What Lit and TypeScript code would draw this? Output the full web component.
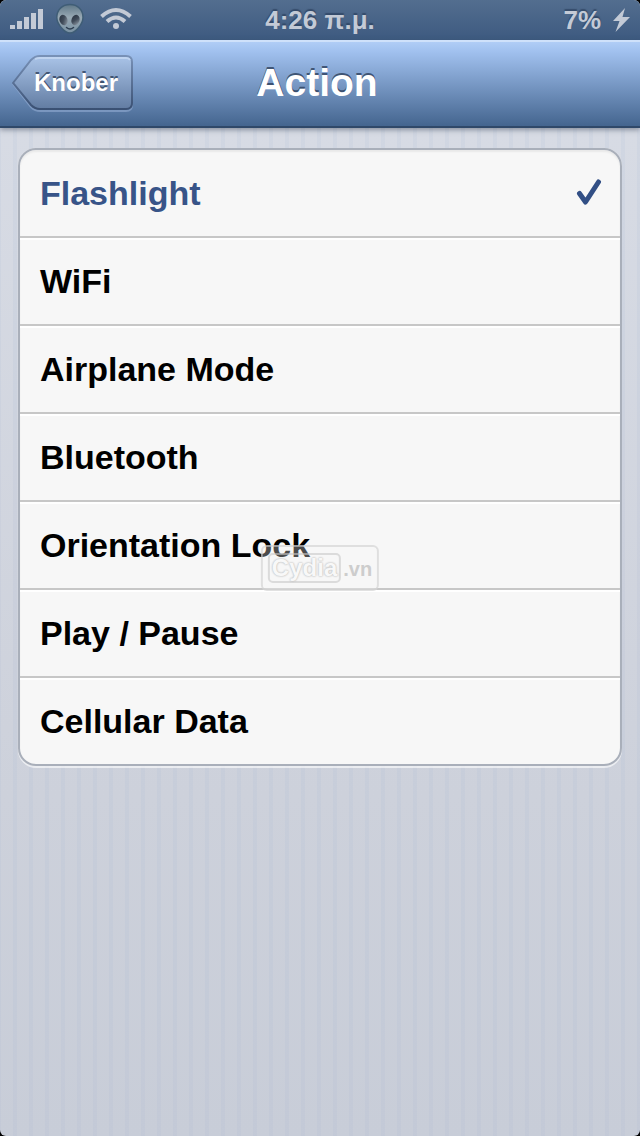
import { LitElement, html, css, svg } from "lit";
import { customElement, state } from "lit/decorators.js";

const ACTIONS = [
  "Flashlight",
  "WiFi",
  "Airplane Mode",
  "Bluetooth",
  "Orientation Lock",
  "Play / Pause",
  "Cellular Data",
];

@customElement("status-bar")
class StatusBar extends LitElement {
  static styles = css`
    :host {
      display: grid;
      grid-template-columns: 1fr auto 1fr;
      align-items: center;
      height: 40px;
      padding: 0 10px;
      box-sizing: border-box;
      background: linear-gradient(#536e8f, #3d5a80);
      color: #c3cad6;
      font-size: 26px;
      font-weight: bold;
      line-height: 40px;
      text-shadow: 0 -2px 1px rgba(30, 48, 76, 0.5);
    }
    .side {
      display: flex;
      align-items: center;
      height: 40px;
      gap: 12px;
    }
    .end {
      justify-content: flex-end;
    }
    svg {
      display: block;
    }
  `;

  render() {
    return html`
      <div class="side">
        <svg width="34" height="40" viewBox="0 0 34 40" fill="#c3cad6" aria-label="Signal">
          ${[4, 8, 12, 16, 20].map(
            (h, i) => svg`<rect x=${i * 7} y=${29 - h} width="5" height=${h} />`
          )}
        </svg>
        <svg width="28" height="40" viewBox="0 0 28 40" aria-label="Alien">
          <defs>
            <linearGradient id="skin" x1="0" y1="0" x2="0" y2="1">
              <stop offset="0" stop-color="#5f7787" />
              <stop offset="0.45" stop-color="#98a9b4" />
              <stop offset="1" stop-color="#7890a2" />
            </linearGradient>
            <linearGradient id="eye" x1="0" y1="0" x2="1" y2="1">
              <stop offset="0" stop-color="#27313f" />
              <stop offset="0.5" stop-color="#414c5a" />
              <stop offset="1" stop-color="#9aa5b0" />
            </linearGradient>
          </defs>
          <path d="M14 4.500C22 4.500 27 10 27 17.500C27 24 19.500 33 14 33C8.500 33 0.800 24 0.800 17.500C0.800 10 6 4.500 14 4.500Z" fill="url(#skin)" stroke="#3f5d76" stroke-width="1.500" />
          <ellipse cx="7.500" cy="20" rx="4" ry="5.300" transform="rotate(-20 7.500 20)" fill="url(#eye)" />
          <ellipse cx="19.500" cy="20" rx="4" ry="5.300" transform="rotate(20 19.500 20)" fill="url(#eye)" />
          <path d="M10.500 27.500Q14 30.500 17.500 27.500" fill="none" stroke="#2d3e50" stroke-width="1.500" stroke-linecap="round" />
        </svg>
        <svg width="40" height="40" viewBox="-4 0 40 40" fill="none" stroke="#c3cad6" stroke-width="4" aria-label="Wi-Fi">
          <path d="M1.500 16.500Q16 3.500 30.500 16.500" />
          <path d="M7 21.500Q16 13.500 25 21.500" />
          <circle cx="16" cy="26" r="3" fill="#c3cad6" stroke="none" />
        </svg>
      </div>
      <div>4:26 π.μ.</div>
      <div class="side end">
        <span>7%</span>
        <svg width="17" height="40" viewBox="0 0 17 40" fill="#c3cad6" aria-label="Charging">
          <path d="M12 8L0 21H6.500L2.500 32L17 17H9.500Z" />
        </svg>
      </div>
    `;
  }
}

@customElement("nav-bar")
class NavBar extends LitElement {
  static styles = css`
    :host {
      display: grid;
      grid-template-columns: 1fr auto 1fr;
      align-items: center;
      height: 88px;
      padding: 0 18px 0 12px;
      box-sizing: border-box;
      background: linear-gradient(#b0cdf6, #a0c0ee 12%, #44658f);
      border-top: 2px solid #cfe1fa;
      border-bottom: 2px solid #2f4869;
      box-shadow: 0 2px 5px rgba(60, 70, 90, 0.5);
      color: #fff;
      text-shadow: 0 -2px 0 rgba(40, 58, 86, 0.75);
      z-index: 1;
    }
    .back {
      display: grid;
      justify-self: start;
      width: 122px;
      height: 58px;
      padding: 0;
      border: 0;
      background: none;
      color: inherit;
      font: bold 24px/56px "Liberation Sans", Arial, sans-serif;
      text-shadow: inherit;
    }
    .back > * {
      grid-area: 1 / 1;
    }
    .back span {
      padding-left: 22px;
      text-align: left;
    }
    h1 {
      margin: 0;
      padding-bottom: 2px;
      font-size: 39px;
      line-height: 48px;
    }
  `;

  render() {
    return html`
      <button class="back">
        <svg width="122" height="58" viewBox="0 0 122 58" fill="none" aria-hidden="true">
          <defs>
            <linearGradient id="face" x1="0" y1="0" x2="0" y2="1">
              <stop offset="0" stop-color="#aac4e8" />
              <stop offset="1" stop-color="#627ca2" />
            </linearGradient>
            <linearGradient id="edge" x1="0" y1="0" x2="0" y2="1">
              <stop offset="0" stop-color="#7891b7" />
              <stop offset="1" stop-color="#3a5073" />
            </linearGradient>
          </defs>
          <path d="M1 29L19 52Q23 56 28 56H114Q120 56 120 50" stroke="#9db6db" stroke-opacity="0.500" stroke-width="2" />
          <path d="M1 28L19 5Q23 1 28 1H114Q120 1 120 7V48Q120 54 114 54H28Q23 54 19 50Z" fill="url(#face)" stroke="url(#edge)" stroke-width="2" />
          <path d="M23 4Q25 3 28 3H114Q117 3 118 5" stroke="#cbdcf4" stroke-opacity="0.700" stroke-width="2" />
        </svg>
        <span>Knober</span>
      </button>
      <h1>Action</h1>
    `;
  }
}

@customElement("action-list")
class ActionList extends LitElement {
  static styles = css`
    :host {
      display: block;
    }
    fieldset {
      margin: 0;
      padding: 0;
      min-width: 0;
      border: 2px solid #a9afba;
      border-radius: 18px;
      background: #f7f7f7;
      box-shadow: 0 2px 0 rgba(255, 255, 255, 0.6), inset 0 2px 2px rgba(0, 0, 0, 0.06);
    }
    .row {
      display: flex;
      align-items: center;
      justify-content: space-between;
      height: 82px;
      padding: 0 18px 2px 20px;
      border-top: 2px solid #fff;
      border-bottom: 2px solid #c7c7c7;
      color: #000;
      font-size: 34px;
      font-weight: bold;
    }
    .row:first-child {
      border-top-color: transparent;
    }
    .row:last-child {
      border-bottom: 0;
    }
    .picked {
      color: #385488;
    }
    input {
      appearance: none;
      position: absolute;
      margin: 0;
      opacity: 0;
    }
  `;

  @state() private selected = "Flashlight";

  render() {
    return html`
      <fieldset aria-label="Action">
        ${ACTIONS.map((name) => {
          const on = name === this.selected;
          return html`
            <label class="row ${on ? "picked" : ""}">
              <input type="radio" name="action" .checked=${on} @change=${() => (this.selected = name)} />
              <span>${name}</span>
              ${on
                ? html`<svg width="26" height="30" viewBox="0 0 26 30" fill="none" stroke="#324f85" stroke-width="5" stroke-linecap="round" stroke-linejoin="round" aria-hidden="true">
                    <path d="M3.500 15.500L9.500 24L22.500 4" />
                  </svg>`
                : ""}
            </label>
          `;
        })}
      </fieldset>
    `;
  }
}

@customElement("cydia-mark")
class CydiaMark extends LitElement {
  static styles = css`
    :host {
      display: flex;
      align-items: center;
      gap: 2px;
      padding: 6px 5px;
      border: 2px solid rgba(205, 205, 205, 0.6);
      border-radius: 6px;
      background: rgba(247, 247, 247, 0.3);
      font-weight: bold;
      line-height: 26px;
      pointer-events: none;
    }
    .name {
      padding: 0 2px;
      border: 2px solid rgba(200, 200, 200, 0.6);
      border-radius: 5px;
      color: #f8f8f8;
      font-size: 24px;
      text-shadow: 0 0 2px #bbb, 0 0 2px #ccc;
    }
    .tld {
      padding-top: 2px;
      color: #cdcdcd;
      font-size: 20px;
    }
  `;

  render() {
    return html`<span class="name">Cydia</span><span class="tld">.vn</span>`;
  }
}

@customElement("app-root")
class AppRoot extends LitElement {
  static styles = css`
    :host {
      display: block;
      min-height: 100vh;
      background: #000;
      font-family: "Liberation Sans", Arial, Helvetica, sans-serif;
    }
    .screen {
      display: flex;
      flex-direction: column;
      min-height: 100vh;
      overflow: hidden;
      border-radius: 6px;
      background:
        repeating-linear-gradient(90deg, transparent 0 12px, rgba(150, 170, 205, 0.1) 12px 16px) 1px 0,
        linear-gradient(#d9dde6, #cdd1db 70%, #c8cdd8);
    }
    main {
      position: relative;
      padding: 20px 18px;
    }
    .mark {
      position: absolute;
      top: 417px;
      left: 50%;
      transform: translateX(-50%);
    }
  `;

  render() {
    return html`
      <div class="screen">
        <status-bar></status-bar>
        <nav-bar></nav-bar>
        <main>
          <action-list></action-list>
          <cydia-mark class="mark"></cydia-mark>
        </main>
      </div>
    `;
  }
}
